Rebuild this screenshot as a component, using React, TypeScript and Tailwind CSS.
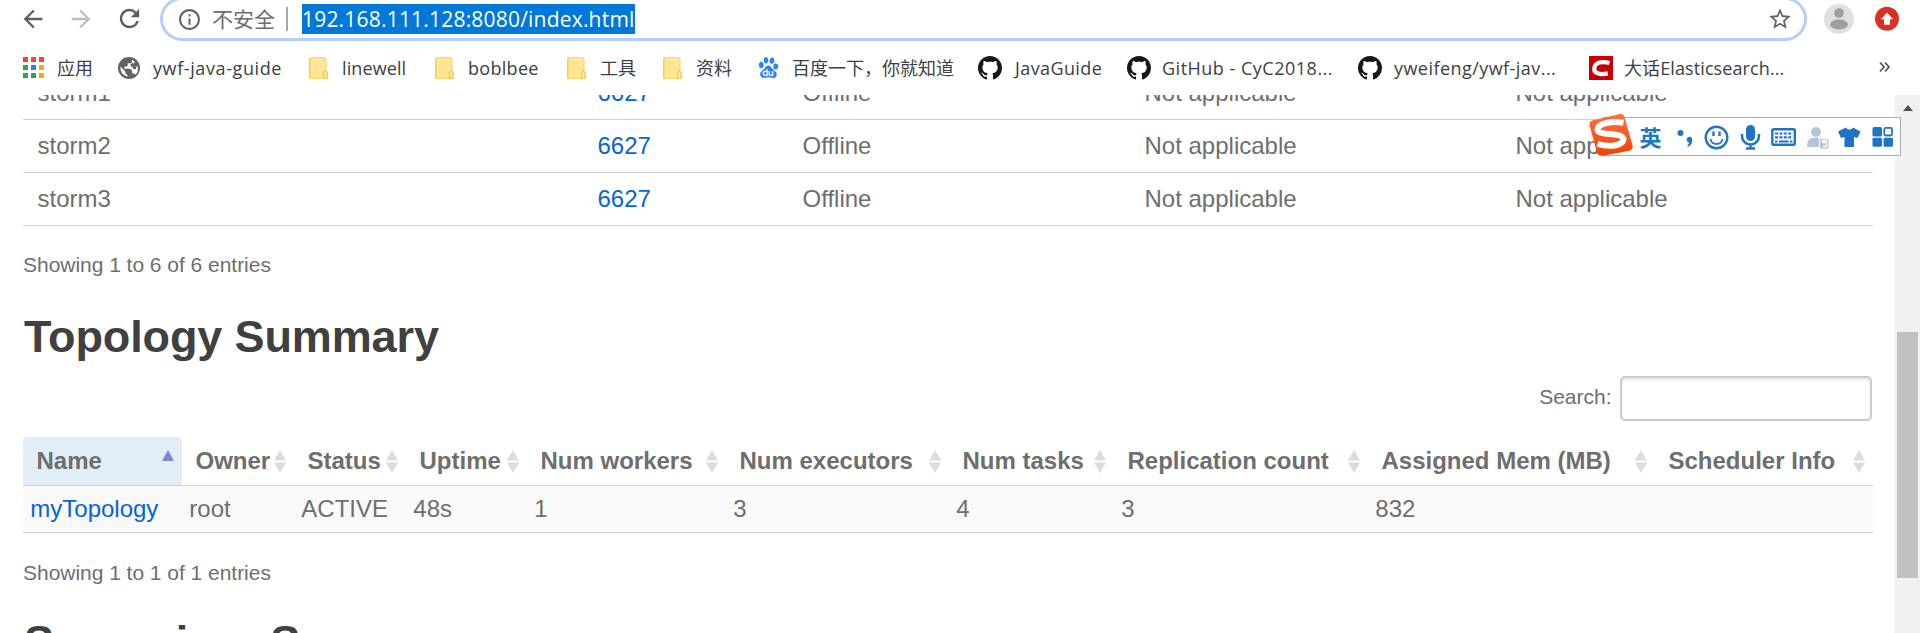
import type { ReactNode } from "react";
import { MdArrowBack, MdArrowForward, MdInfoOutline, MdRefresh, MdStarBorder } from "react-icons/md";
import { SiBaidu } from "react-icons/si";

const AppsIcon = () => (
  <svg width="21" height="21" viewBox="0 0 21 21" className="block">
    <path d="M0 0h5v5H0zM8 0h5v5H8zM16 0h5v5h-5z" fill="#f44336" />
    <path d="M0 8h5v5H0zM0 16h5v5H0z" fill="#34a05a" />
    <path d="M8 8h5v5H8z" fill="#1e88f0" />
    <path d="M16 8h5v5h-5zM16 16h5v5h-5z" fill="#fba90a" />
    <path d="M8 16h5v5H8z" fill="#34a05a" />
  </svg>
);

const GlobeIcon = () => (
  <svg width="22" height="22" viewBox="0 0 22 22" className="block">
    <circle cx="11" cy="11" r="11" fill="#5f6368" />
    <path d="M14 2.700v1.500c0 1.200-1 2.100-2.200 2.100H9.600v2.200c0 .7-.5 1.100-1.100 1.100H6.400v2.100H11c1.800 0 3.300 1.400 3.300 3.200v1.500h1.200c1 0 1.700.5 2 1.300a8.800 8.800 0 0 0 1.900-8.800c-1.600 1-3.900.7-4.300-.9-.3-1.600 1-2 1.700-3.100-.8-.9-1.800-1.700-2.800-2.200z" fill="#fff" />
    <path d="M2.500 9.600l4.800 4.800v1c0 1.100.9 2.100 2.100 2.100v2.200A8.800 8.800 0 0 1 2.500 9.600z" fill="#fff" />
    <path d="M15 6c-1.500 0-3 1.200-2.500 2.500s2 1 2.500 2.500 1.500 1.500 3 1l.5-2.500c-2 .3-3.500-.8-3.500-3.500z" fill="#5f6368" />
  </svg>
);

const FolderIcon = () => (
  <svg width="19" height="22" viewBox="0 0 19 22" className="block">
    <path d="M.5 1.500L1.500.5H16l1 1V14.500l1.300 1.500V21.500H.5z" fill="#ffe594" stroke="#f9d65c" />
    <path d="M1 1v20" stroke="#f3cb47" />
    <path d="M14.500 21.300V16a1.800 1.800 0 0 1 3.700 0v5.300z" fill="#ffe58f" stroke="#efc63e" />
  </svg>
);

const RedCIcon = () => (
  <svg width="24" height="24" viewBox="0 0 24 24" className="block">
    <path d="M0 0h24v24H0z" fill="#ca0000" />
    <path d="M20.500 7C13.500 4.900 5.800 6.200 5.200 12.400c-.4 5.600 6.500 6.600 13.600 5" fill="none" stroke="#fff" strokeWidth="4.200" />
  </svg>
);

const Github = () => (
  <svg width="24" height="24" viewBox="0 0 16 16" fill="#181717" className="block">
    <path d="M8 0C3.580 0 0 3.580 0 8c0 3.540 2.290 6.530 5.470 7.590.4.070.55-.17.55-.38 0-.19-.01-.82-.01-1.490-2.010.37-2.530-.49-2.690-.94-.09-.23-.48-.94-.82-1.130-.28-.15-.68-.52-.01-.53.63-.01 1.080.58 1.230.82.72 1.210 1.870.87 2.330.66.07-.52.28-.87.51-1.070-1.780-.2-3.640-.89-3.640-3.950 0-.87.31-1.590.82-2.150-.08-.2-.36-1.020.08-2.120 0 0 .67-.21 2.200.82.64-.18 1.320-.27 2-.27s1.360.09 2 .27c1.530-1.040 2.200-.82 2.200-.82.44 1.100.16 1.920.08 2.120.51.56.82 1.270.82 2.150 0 3.070-1.870 3.750-3.650 3.950.29.25.54.73.54 1.480 0 1.070-.01 1.930-.01 2.200 0 .21.15.46.55.38A8.013 8.013 0 0 0 16 8c0-4.420-3.580-8-8-8z" />
  </svg>
);

type Bookmark = { icon: ReactNode; label: string; box: string; text: string; tracking?: string };

const bookmarks: Bookmark[] = [
  { icon: <AppsIcon />, label: "应用", box: "w-[95px]", text: "w-[34px]" },
  { icon: <GlobeIcon />, label: "ywf-java-guide", box: "w-[191px]", text: "w-[35px]", tracking: "tracking-[0.6px]" },
  { icon: <FolderIcon />, label: "linewell", box: "w-[126px]", text: "w-[33px]", tracking: "tracking-[0.1px]" },
  { icon: <FolderIcon />, label: "boblbee", box: "w-[132px]", text: "w-[33px]", tracking: "tracking-[0.300px]" },
  { icon: <FolderIcon />, label: "工具", box: "w-[96px]", text: "w-[33px]" },
  { icon: <FolderIcon />, label: "资料", box: "w-[95px]", text: "w-[33px]" },
  { icon: <SiBaidu size={21} color="#2b83fb" />, label: "百度一下，你就知道", box: "w-[220px]", text: "w-[34px]" },
  { icon: <Github />, label: "JavaGuide", box: "w-[149px]", text: "w-[37px]", tracking: "tracking-[0.4px]" },
  { icon: <Github />, label: "GitHub - CyC2018...", box: "w-[231px]", text: "w-[35px]", tracking: "tracking-[0.5px]" },
  { icon: <Github />, label: "yweifeng/ywf-jav...", box: "w-[231px]", text: "w-[36px]", tracking: "tracking-[0.45px]" },
  { icon: <RedCIcon />, label: "大话Elasticsearch...", box: "w-[291px]", text: "w-[35px]", tracking: "tracking-[0.1px]" },
];

function BrowserChrome() {
  return (
    <header className="h-[95px] shrink-0 bg-white font-['Open_Sans','Noto_Sans_CJK_SC',sans-serif]">
      <div className="flex h-[41px] items-start">
        <div className="flex h-[37px] w-[160px] shrink-0 items-center pl-[19px]">
          <MdArrowBack size={28} color="#5a5e62" />
          <MdArrowForward size={28} color="#bcbec0" className="ml-[20px]" />
          <MdRefresh size={29} color="#5a5e62" className="ml-[20px]" />
        </div>
        <div className="-mt-[3px] flex h-[44px] w-[1647px] shrink-0 items-center rounded-full border-[3px] border-[#b3cdfb] pl-[14px] pr-[11px]">
          <MdInfoOutline size={25} color="#5f6368" />
          <span className="ml-[10px] w-[74px] whitespace-nowrap text-[21px] leading-[30px] text-[#6a6d71]">不安全</span>
          <span className="h-[24px] w-[2px] bg-[#a5a7aa]" />
          <span className="ml-[14px] h-[30px] w-[333px] whitespace-nowrap bg-[#0078d7] text-[21px] leading-[31px] tracking-[0.200px] text-white">192.168.111.128:8080/index.html</span>
          <MdStarBorder size={26} color="#5f6368" className="ml-auto" />
        </div>
        <svg width="113" height="41" viewBox="1807 0 113 41">
          <circle cx="1839" cy="19" r="15" fill="#e0e0e0" />
          <circle cx="1839" cy="13" r="4.800" fill="#9e9e9e" />
          <ellipse cx="1839" cy="24.500" rx="8.800" ry="5" fill="#9e9e9e" />
          <circle cx="1887" cy="18.800" r="12" fill="#d93025" />
          <path d="M1887 12.500l6 6.700h-3v5.600h-6v-5.600h-3z" fill="#fff" />
        </svg>
      </div>
      <div className="flex h-[53px] items-center pl-[23px] text-[18px] text-[#3c4043]">
        {bookmarks.map((b) => (
          <div key={b.label} className={`flex shrink-0 items-center whitespace-nowrap ${b.box}`}>
            <span className={`shrink-0 ${b.text}`}>{b.icon}</span>
            <span className={`pt-px ${b.tracking ?? ""}`}>{b.label}</span>
          </div>
        ))}
        <svg width="12" height="12" viewBox="0 0 12 12" className="-mt-[2px] -ml-px" fill="none" stroke="#55595d" strokeWidth="1.800">
          <path d="M1 1.500l4 4.500-4 4.500M6 1.500l4 4.500-4 4.500" />
        </svg>
      </div>
    </header>
  );
}

function InputMethodBar() {
  return (
    <div className="absolute left-[1589px] top-[113px] h-[44px] w-[312px]">
      <div className="absolute right-0 top-[4px] h-[39px] w-[298px] border border-[#a9abb5] bg-white" />
      <svg className="absolute left-0 top-0" width="312" height="44" viewBox="0 0 312 44">
        <defs>
          <linearGradient id="logo" x1="0" y1="0" x2="0" y2="1">
            <stop offset="0" stopColor="#ff7040" />
            <stop offset="1" stopColor="#ee4306" />
          </linearGradient>
        </defs>
        <path d="M4 7.200L30 1.200c3-.6 4.800.6 5.500 3l8 28c.8 3-.4 4.800-3.200 5.500l-26.500 5c-3 .4-5-.3-5.800-3.200L.6 12.500C0 9.600 1 7.900 4 7.200z" fill="url(#logo)" />
        <path d="M34.500 9.800C23 7.500 9 10.500 8.500 16.500C8.500 23.500 33.500 18.500 34.500 26C34 33 20 34.500 8.500 30.800" fill="none" stroke="#fff" strokeWidth="6" />
        <g fill="#2074c8">
          <circle cx="91.500" cy="20" r="3" />
          <path d="M98.500 24.500c3-1.800 5.500.4 4.600 4.200-.6 2.500-2 4.200-4.200 5l-.6-1.300c1.300-.8 1.900-1.900 1.700-3-2.300-.4-3-3.200-1.500-4.900z" />
          <rect x="157" y="12" width="9" height="16" rx="4.500" />
          <path d="M153 21v2a8.500 8.500 0 0 0 17 0V21M161.500 32v4M157 35.500h9" fill="none" stroke="#2074c8" strokeWidth="2.500" />
          <path d="M257.500 14.500c1.800 2.800 5.200 2.800 7 0l7.500 4-3 6.500-3.500-1V34h-9.500v-10l-3.500 1-3-6.500z" transform="translate(-.5 0)" />
          <rect x="283.500" y="14" width="9.500" height="9.500" rx="1.500" />
          <rect x="283.500" y="24.800" width="9.500" height="9" rx="1.500" />
          <rect x="294.500" y="24.800" width="9.500" height="9" rx="1.500" />
        </g>
        <rect x="295.300" y="14.800" width="7.700" height="7.700" rx="1.500" fill="none" stroke="#2074c8" strokeWidth="1.800" />
        <g fill="none" stroke="#2074c8">
          <circle cx="127.500" cy="24.500" r="10.800" strokeWidth="2.400" />
          <path d="M121.500 26c.6 6.500 11.400 6.500 12 0" strokeWidth="2" />
          <path d="M124.500 18.500v4.500M130.500 18.500v4.500" strokeWidth="2.400" />
          <rect x="183.300" y="16.300" width="22.500" height="15.500" rx="1.500" strokeWidth="2.400" />
          <path d="M186 20.500h17.500M186 24.300h17.500" strokeWidth="2.200" strokeDasharray="3 1.400" />
          <path d="M186 28.500h2.500M190 28.500h9.500M201 28.500h2.500" strokeWidth="2.200" />
        </g>
        <g fill="#b7c3d9">
          <circle cx="227" cy="19" r="5" />
          <path d="M218 34c0-5.500 2-9.200 6-9.200h9V34z" />
          <path d="M230.500 25.500h9.500v10.500h-9.500z" stroke="#fff" />
          <path d="M237 29.500h-3.500v-2h4v6h-3.500" fill="none" stroke="#fff" strokeWidth="1.300" />
        </g>
      </svg>
      <span className="absolute left-[50.500px] top-[8px] font-['Noto_Sans_CJK_SC',sans-serif] text-[22px] font-bold leading-[30px] text-[#2074c8]">英</span>
    </div>
  );
}

function SortArrows() {
  return (
    <svg width="12" height="23" viewBox="0 0 12 23" fill="#dcdcdc" className="shrink-0">
      <path d="M6 0l6 10.500H0zM0 12.500h12L6 23z" />
    </svg>
  );
}

const supervisors = ["storm1", "storm2", "storm3"];

const columns = [
  { title: "Name", value: "myTopology", width: "w-[159px]" },
  { title: "Owner", value: "root", width: "w-[112px]" },
  { title: "Status", value: "ACTIVE", width: "w-[112px]" },
  { title: "Uptime", value: "48s", width: "w-[121px]" },
  { title: "Num workers", value: "1", width: "w-[199px]" },
  { title: "Num executors", value: "3", width: "w-[223px]" },
  { title: "Num tasks", value: "4", width: "w-[165px]" },
  { title: "Replication count", value: "3", width: "w-[254px]" },
  { title: "Assigned Mem (MB)", value: "832", width: "w-[287px]" },
  { title: "Scheduler Info", value: "", width: "w-[218px]" },
];

export default function App() {
  return (
    <div className="relative flex h-[633px] w-[1920px] flex-col overflow-hidden bg-white font-['Liberation_Sans',Arial,sans-serif] text-[24px] text-[#6e6e6e]">
      <BrowserChrome />
      <div className="flex min-h-0 flex-1">
        <main className="w-[1895px] overflow-hidden pl-[23px] pr-[22px]">
          <div className="-mt-[28px]">
            {supervisors.map((host) => (
              <div key={host} className="flex h-[53px] items-center border-b border-[#d0d0d0]">
                <span className="w-[574.500px] pl-[14.500px]">{host}</span>
                <a className="w-[205px] text-[#0664d8]">6627</a>
                <span className="w-[342px]">Offline</span>
                <span className="w-[371px]">Not applicable</span>
                <span>Not applicable</span>
              </div>
            ))}
          </div>
          <p className="mt-[24px] text-[21px] leading-[30px] tracking-[-0.030px]">Showing 1 to 6 of 6 entries</p>
          <h2 className="mt-[30px] pl-px text-[45px] font-bold leading-[54px] tracking-[-0.120px] text-[#404040]">Topology Summary</h2>
          <div className="mt-[12px] flex h-[45px] items-center justify-end pr-[1px]">
            <label className="pb-[3px] text-[21px]">Search:</label>
            <input className="ml-[8.500px] h-[45px] w-[252px] rounded-[5px] border-2 border-[#cbcbcb] bg-white shadow-[inset_0_2px_3px_#e5e5e5]" />
          </div>
          <div className="mt-[16px] flex h-[49px] items-center border-b border-[#d0d0d0] font-bold">
            {columns.map((c, i) => (
              <div
                key={c.title}
                className={`flex h-[48px] shrink-0 items-center justify-between whitespace-nowrap pl-[13.500px] pr-[8px] ${c.width} ${i === 0 ? "rounded-t-[4px] bg-[#e1eef6]" : ""}`}
              >
                {c.title}
                {i === 0 ? (
                  <svg width="12" height="11" viewBox="0 0 12 11" className="mb-[12px]">
                    <path d="M6 0l6 11H0z" fill="#8084dc" />
                  </svg>
                ) : (
                  <SortArrows />
                )}
              </div>
            ))}
          </div>
          <div className="flex h-[47px] items-center border-b border-[#d0d0d0] bg-[#f9f9f9]">
            {columns.map((c, i) => (
              <span key={c.title} className={`shrink-0 whitespace-nowrap pl-[7.300px] ${c.width} ${i === 0 ? "text-[#0664d8]" : ""}`}>
                {c.value}
              </span>
            ))}
          </div>
          <p className="mt-[25px] text-[21px] leading-[30px] tracking-[-0.030px]">Showing 1 to 1 of 1 entries</p>
          <h2 className="mt-[27px] pl-px text-[45px] font-bold leading-[54px] tracking-[-0.120px] text-[#404040]">Supervisor Summary</h2>
        </main>
        <aside className="flex w-[25px] shrink-0 flex-col items-center bg-[#f1f1f1]">
          <svg width="10" height="6" viewBox="0 0 10 6" className="mt-[10px]">
            <path d="M5 0l5 6H0z" fill="#505050" />
          </svg>
          <div className="mt-[221px] h-[246px] w-[21px] shrink-0 bg-[#c1c1c1]" />
        </aside>
      </div>
      <InputMethodBar />
    </div>
  );
}
